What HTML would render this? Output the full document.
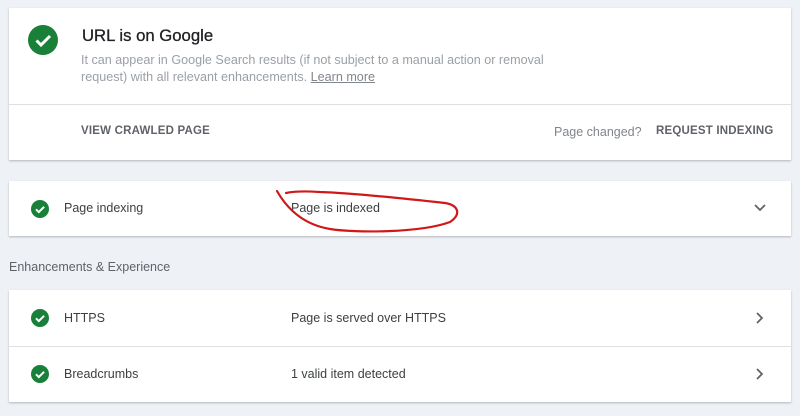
<!DOCTYPE html>
<html><head><style>
body{margin:0;width:800px;height:416px;background:#eef1f6;font-family:"Liberation Sans",sans-serif;position:relative;overflow:hidden}
.card{position:absolute;left:9px;width:782px;background:#fff;box-shadow:0 1px 2px rgba(0,0,0,.25)}
.t{position:absolute;white-space:nowrap}
.chk{position:absolute;width:18px;height:18px;border-radius:50%;background:#188038}
.chk svg{position:absolute;left:0;top:0}
.row{font-size:12.5px;color:#3c4043}
.btn{font-size:11.5px;font-weight:bold;color:#5f6368;letter-spacing:.2px}
</style></head><body>
<div class="card" style="top:8px;height:152px">
  <div class="chk" style="left:19px;top:17px;width:30px;height:30px"><svg width="30" height="30"><path d="M8.5 15.5l4.5 4.5 9-9" stroke="#fff" stroke-width="3" fill="none"/></svg></div>
  <div class="t" style="left:73px;top:18px;font-size:16.7px;color:#202124;-webkit-text-stroke:.3px #202124">URL is on Google</div>
  <div class="t" style="left:72px;top:44px;font-size:12.6px;color:#9aa0a6;line-height:17px">It can appear in Google Search results (if not subject to a manual action or removal<br>request) with all relevant enhancements. <u style="color:#80868b">Learn more</u></div>
  <div style="position:absolute;left:0;right:0;top:96px;border-top:1px solid #e0e0e0"></div>
  <div class="t btn" style="left:72px;top:117px">VIEW CRAWLED PAGE</div>
  <div class="t" style="left:545px;top:117px;font-size:12.5px;color:#80868b">Page changed?</div>
  <div class="t btn" style="left:647px;top:117px">REQUEST INDEXING</div>
</div>
<div class="card" style="top:181px;height:55px">
  <div class="chk" style="left:22px;top:19px"><svg width="18" height="18"><path d="M5 9.3l2.8 2.8 5.3-5.3" stroke="#fff" stroke-width="2" fill="none"/></svg></div>
  <div class="t row" style="left:55px;top:20px">Page indexing</div>
  <div class="t row" style="left:282px;top:20px">Page is indexed</div>
  <svg class="t" style="left:745px;top:22px" width="12" height="10"><path d="M1 2l5 5 5-5" stroke="#5f6368" stroke-width="1.8" fill="none"/></svg>
</div>
<div class="t" style="left:9px;top:260px;font-size:12.5px;color:#5f6368">Enhancements &amp; Experience</div>
<div class="card" style="top:290px;height:112px">
  <div class="chk" style="left:22px;top:19px"><svg width="18" height="18"><path d="M5 9.3l2.8 2.8 5.3-5.3" stroke="#fff" stroke-width="2" fill="none"/></svg></div>
  <div class="t row" style="left:55px;top:21px">HTTPS</div>
  <div class="t row" style="left:282px;top:21px">Page is served over HTTPS</div>
  <svg class="t" style="left:746px;top:22px" width="10" height="12"><path d="M2 1l5 5-5 5" stroke="#5f6368" stroke-width="1.8" fill="none"/></svg>
  <div style="position:absolute;left:0;right:0;top:56px;border-top:1px solid #e0e0e0"></div>
  <div class="chk" style="left:22px;top:75px"><svg width="18" height="18"><path d="M5 9.3l2.8 2.8 5.3-5.3" stroke="#fff" stroke-width="2" fill="none"/></svg></div>
  <div class="t row" style="left:55px;top:77px">Breadcrumbs</div>
  <div class="t row" style="left:282px;top:77px">1 valid item detected</div>
  <svg class="t" style="left:746px;top:78px" width="10" height="12"><path d="M2 1l5 5-5 5" stroke="#5f6368" stroke-width="1.8" fill="none"/></svg>
</div>
<svg style="position:absolute;left:0;top:0" width="800" height="416"><path d="M277 191C285 205 300 224 330 229C355 233 420 233 450 222C462 214 458 205 445 203C400 198 350 193 320 192C305 191 295 191 286 193" stroke="#d01818" stroke-width="2.2" fill="none" stroke-linecap="round"/></svg>
</body></html>
